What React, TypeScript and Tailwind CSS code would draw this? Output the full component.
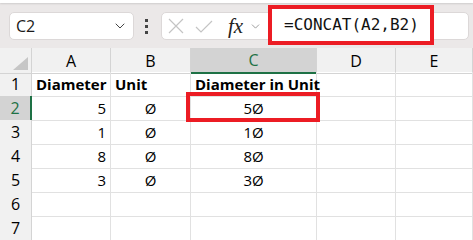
import { ChevronDown } from 'lucide-react';

const cols = ['A', 'B', 'C', 'D', 'E'];

const rows: { n: number; a?: string; b?: string; c?: string; head?: boolean }[] = [
  { n: 1, a: 'Diameter', b: 'Unit', c: 'Diameter in Unit', head: true },
  { n: 2, a: '5', b: 'Ø', c: '5Ø' },
  { n: 3, a: '1', b: 'Ø', c: '1Ø' },
  { n: 4, a: '8', b: 'Ø', c: '8Ø' },
  { n: 5, a: '3', b: 'Ø', c: '3Ø' },
  { n: 6 },
  { n: 7 },
];

const gridCols = 'grid grid-cols-[32px_79px_80px_126px_79px_77px]';

function FormulaBar() {
  return (
    <div className="relative h-[48px] bg-[#ebe8e8]">
      <div className="h-[3px] bg-white shadow-[0_1px_2px_rgba(0,0,0,0.12)]" />
      <div className="absolute left-[9px] top-[12px] flex h-[28px] w-[125px] items-center justify-between rounded-[5px] border border-[#dcd8d8] bg-white pl-[6px] pr-[5px]">
        <span className="font-['Open_Sans'] text-[16px] text-[#1a1a1a]">C2</span>
        <ChevronDown size={16} strokeWidth={1.5} className="text-[#444]" />
      </div>
      <div className="absolute left-[145px] top-[19px] flex flex-col gap-[3px]">
        <span className="h-[3px] w-[3px] bg-[#444]" />
        <span className="h-[3px] w-[3px] bg-[#444]" />
        <span className="h-[3px] w-[3px] bg-[#444]" />
      </div>
      <div className="absolute left-[161px] top-[12px] flex h-[28px] w-[120px] items-center rounded-[5px] border border-[#dcd8d8] bg-white pl-[6px]">
        <svg width="16" height="16" viewBox="0 0 16 16" className="text-[#c4c4c4]">
          <path d="M1 1L15 15M15 1L1 15" stroke="currentColor" strokeWidth="1.2" fill="none" />
        </svg>
        <svg width="18" height="14" viewBox="0 0 18 14" className="ml-[11px] mt-[2px] text-[#c4c4c4]">
          <path d="M1 7L6 12L17 1" stroke="currentColor" strokeWidth="1.2" fill="none" />
        </svg>
        <span className="ml-[15px] font-['Liberation_Serif'] text-[21px] italic leading-none text-[#222]">fx</span>
        <ChevronDown size={13} strokeWidth={1.5} className="ml-[6px] text-[#888]" />
      </div>
      <div className="absolute left-[270px] right-[4px] top-[12px] h-[28px] rounded-[5px] border border-[#dcd8d8] bg-white" />
      <div className="absolute left-[268px] top-[5px] flex h-[40px] w-[166px] items-center border-[4px] border-[#ec1c24] bg-white pl-[12px]">
        <span className="font-['DejaVu_Sans_Mono'] text-[16px] text-[#111]">=CONCAT(A2,B2)</span>
      </div>
    </div>
  );
}

export default function App() {
  return (
    <div className="relative h-[240px] w-[473px] overflow-hidden bg-white font-['Open_Sans',sans-serif] text-black">
      <FormulaBar />
      <div className={`${gridCols} h-[24px] bg-[#f1f1f1]`}>
        <div className="relative border-r border-b border-[#d4d4d4]">
          <svg className="absolute bottom-[3px] right-[3px]" width="15" height="13">
            <polygon points="15,0 15,13 0,13" fill="#c6c6c6" />
          </svg>
        </div>
        {cols.map((c) => (
          <div
            key={c}
            className={
              c === 'C'
                ? 'flex items-center justify-center border-r border-b-2 border-r-[#d4d4d4] border-b-[#1e7145] bg-[#d3d3d3] text-[16px] text-[#1e7145]'
                : 'flex items-center justify-center border-r border-b border-[#d4d4d4] text-[16px]'
            }
          >
            {c}
          </div>
        ))}
      </div>
      {rows.map((r) => (
        <div key={r.n} className={`${gridCols} h-[24px]`}>
          <div
            className={
              r.n === 2
                ? 'flex items-center justify-center border-r-2 border-b border-r-[#1e7145] border-b-[#d4d4d4] bg-[#d3d3d3] text-[16px] text-[#1e7145]'
                : 'flex items-center justify-center border-r border-b border-[#d4d4d4] bg-[#f1f1f1] text-[16px]'
            }
          >
            {r.n}
          </div>
          <div
            className={`flex items-center border-r border-b border-[#e1e1e1] px-[4px] text-[15px] ${
              r.head ? 'justify-start font-bold' : 'justify-end'
            }`}
          >
            {r.a}
          </div>
          <div
            className={`flex items-center border-r border-b border-[#e1e1e1] px-[4px] text-[15px] ${
              r.head ? 'justify-start font-bold' : 'justify-center'
            }`}
          >
            {r.b}
          </div>
          <div
            className={`flex items-center whitespace-nowrap border-r border-b border-[#e1e1e1] px-[4px] text-[15px] ${
              r.head ? 'justify-start font-bold' : 'justify-center'
            }`}
          >
            {r.c}
          </div>
          <div className="border-r border-b border-[#e1e1e1]" />
          <div className="border-r border-b border-[#e1e1e1]" />
        </div>
      ))}
      <div className="pointer-events-none absolute left-[186px] top-[92px] h-[30px] w-[134px] border-[4px] border-[#ec1c24]" />
    </div>
  );
}
